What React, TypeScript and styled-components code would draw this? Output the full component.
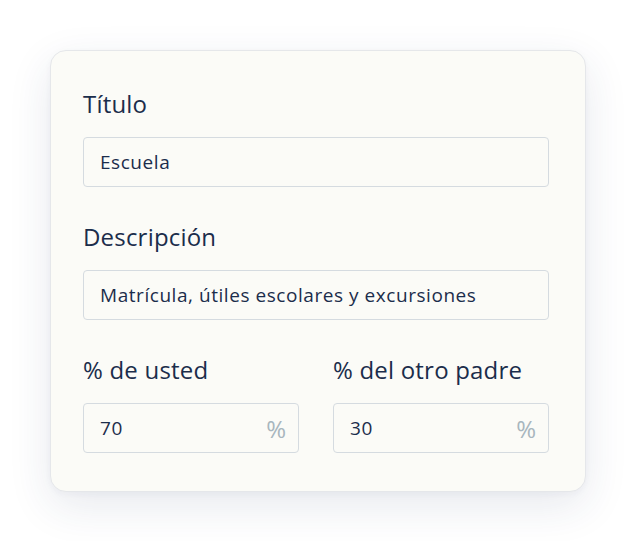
import React from 'react';
import styled, { createGlobalStyle } from 'styled-components';

const GlobalStyle = createGlobalStyle`
  html, body {
    margin: 0;
    padding: 0;
    background: #ffffff;
  }
  body {
    font-family: "Open Sans", "Noto Sans", sans-serif;
    color: #1b2d4b;
  }
`;

const Page = styled.div`
  width: 636px;
  height: 541px;
  padding: 50px 0 0 50px;
  box-sizing: border-box;
`;

const Card = styled.div`
  width: 536px;
  box-sizing: border-box;
  padding: 38px 36px 38px 32px;
  background: #fbfbf7;
  border: 1px solid #e5e7ea;
  border-radius: 16px;
  box-shadow: 0 14px 44px rgba(40, 55, 100, 0.11), 0 2px 6px rgba(40, 55, 100, 0.04);
  display: flex;
  flex-direction: column;
  gap: 35px;
`;

const Row = styled.div`
  display: grid;
  grid-template-columns: 1fr 1fr;
  column-gap: 34px;
`;

const Field = styled.div`
  display: flex;
  flex-direction: column;
  gap: 18px;
`;

const Label = styled.div`
  font-size: 24px;
  line-height: 30px;
  letter-spacing: 0.2px;
  color: #1b2d4b;
`;

const InputBox = styled.div`
  height: 50px;
  box-sizing: border-box;
  border: 1px solid #d5dbe0;
  border-radius: 4px;
  background: #fbfbf7;
  display: flex;
  align-items: center;
  justify-content: space-between;
  padding: 0 12px 0 16px;
  font-size: 19px;
  letter-spacing: 0.55px;
  color: #1b2d4b;
`;

const Suffix = styled.span`
  font-size: 24px;
  letter-spacing: 0;
  color: #a8b6be;
`;

type FieldProps = { label: string; value: string; suffix?: string };

const FormField: React.FC<FieldProps> = ({ label, value, suffix }) => (
  <Field>
    <Label>{label}</Label>
    <InputBox>
      <span>{value}</span>
      {suffix && <Suffix>{suffix}</Suffix>}
    </InputBox>
  </Field>
);

export default function App() {
  return (
    <>
      <GlobalStyle />
      <Page>
        <Card>
          <FormField label="Título" value="Escuela" />
          <FormField label="Descripción" value="Matrícula, útiles escolares y excursiones" />
          <Row>
            <FormField label="% de usted" value="70" suffix="%" />
            <FormField label="% del otro padre" value="30" suffix="%" />
          </Row>
        </Card>
      </Page>
    </>
  );
}
